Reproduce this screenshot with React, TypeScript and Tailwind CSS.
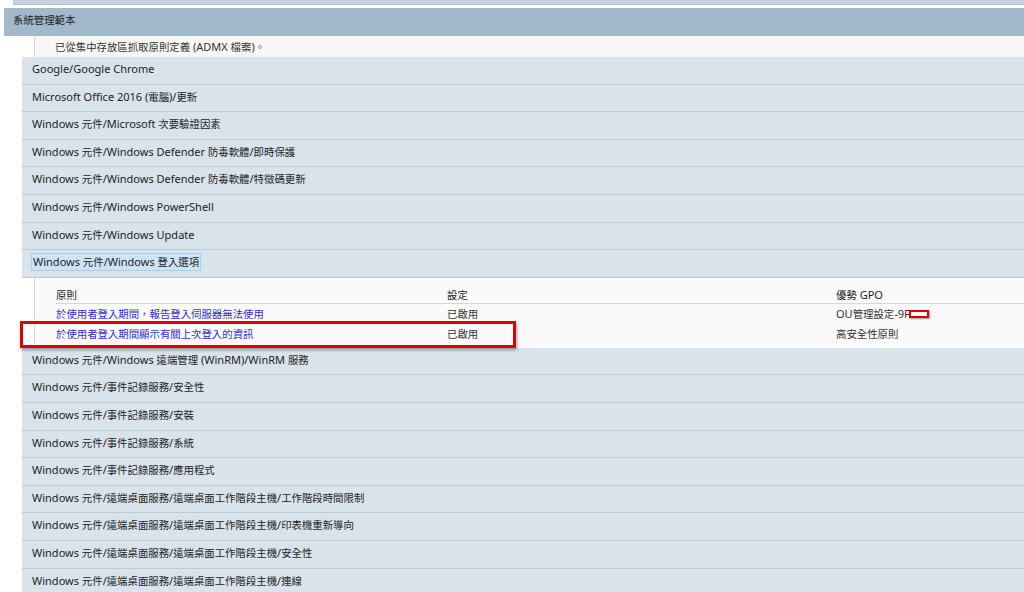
import React from "react";

const before = [
  "Google/Google Chrome",
  "Microsoft Office 2016 (電腦)/更新",
  "Windows 元件/Microsoft 次要驗證因素",
  "Windows 元件/Windows Defender 防毒軟體/即時保護",
  "Windows 元件/Windows Defender 防毒軟體/特徵碼更新",
  "Windows 元件/Windows PowerShell",
  "Windows 元件/Windows Update",
];

const after = [
  "Windows 元件/Windows 遠端管理 (WinRM)/WinRM 服務",
  "Windows 元件/事件記錄服務/安全性",
  "Windows 元件/事件記錄服務/安裝",
  "Windows 元件/事件記錄服務/系統",
  "Windows 元件/事件記錄服務/應用程式",
  "Windows 元件/遠端桌面服務/遠端桌面工作階段主機/工作階段時間限制",
  "Windows 元件/遠端桌面服務/遠端桌面工作階段主機/印表機重新導向",
  "Windows 元件/遠端桌面服務/遠端桌面工作階段主機/安全性",
  "Windows 元件/遠端桌面服務/遠端桌面工作階段主機/連線",
];

// CJK glyphs in the screenshot are a bit narrower than the latin text size
function T({ s }: { s: string }) {
  const parts = s.split(/([\u3000-\u9fff\uff00-\uffef]+)/);
  return (
    <span>
      {parts.map((p, i) =>
        i % 2 === 1 ? (
          <span key={i} className="text-[10.4px]">
            {p}
          </span>
        ) : (
          <React.Fragment key={i}>{p}</React.Fragment>
        )
      )}
    </span>
  );
}

function Row({ children }: { children: React.ReactNode }) {
  return (
    <div className="ml-[22px] h-[27.6px] flex items-center pl-[10px] pb-[3px] bg-[#d9e3eb] border-b border-[#bfc7cf] text-[#222]">
      {children}
    </div>
  );
}

export default function App() {
  return (
    <div
      className="relative w-[1024px] h-[592px] overflow-hidden bg-white text-[11px] leading-none"
      style={{ fontFamily: '"Noto Sans", "Noto Sans CJK TC", sans-serif' }}
    >
      <div className="ml-[13px] h-[5px] bg-[#c3d2de] border-b border-[#b5bcc2]"></div>
      <div className="mt-[3px] ml-[4px] h-[28px] bg-[#a2b9cc] pl-[9px] pt-[6px] text-[#1c1c1c]">
        <T s="系統管理範本" />
      </div>
      <div className="ml-[34px] h-[21px] bg-[#f7f7f7] border-l border-[#d4d4d4] flex items-center pl-[20px] text-[#333]">
        <T s="已從集中存放區抓取原則定義 (ADMX 檔案)。" />
      </div>
      {before.map((t) => (
        <Row key={t}>
          <T s={t} />
        </Row>
      ))}
      <Row>
        <span className="bg-[#cde4f7] outline outline-1 outline-[#a9cdec] px-[1px] py-[2px]">
          <T s="Windows 元件/Windows 登入選項" />
        </span>
      </Row>
      <div className="ml-[34px] bg-[#fafafa] border-l border-[#d4d4d4] pt-[8px] pb-[4px] pl-[21px]">
        <div className="grid grid-cols-[391px_389px_1fr] h-[18px] items-center border-b border-[#d6d6d6] text-[#222]">
          <T s="原則" />
          <T s="設定" />
          <T s="優勢 GPO" />
        </div>
        <div className="grid grid-cols-[391px_389px_1fr] h-[20px] items-center text-[#333]">
          <span className="text-[#3030cc]"><T s="於使用者登入期間，報告登入伺服器無法使用" /></span>
          <T s="已啟用" />
          <span className="flex items-center">
            <T s="OU管理設定-9F" />
            <span className="inline-block w-[20px] h-[8px] bg-white border-2 border-[#e00000] shadow-[1px_1px_2px_rgba(0,0,0,0.4)] -ml-[1px]"></span>
          </span>
        </div>
        <div className="grid grid-cols-[391px_389px_1fr] h-[20px] items-center text-[#333]">
          <span className="text-[#3030cc]"><T s="於使用者登入期間顯示有關上次登入的資訊" /></span>
          <T s="已啟用" />
          <T s="高安全性原則" />
        </div>
      </div>
      {after.map((t) => (
        <Row key={t}>
          <T s={t} />
        </Row>
      ))}
      <div className="absolute left-[20px] top-[321px] w-[496px] h-[27px] border-[3px] border-[#dd0000] shadow-[1px_2px_3px_rgba(0,0,0,0.35)]"></div>
    </div>
  );
}
